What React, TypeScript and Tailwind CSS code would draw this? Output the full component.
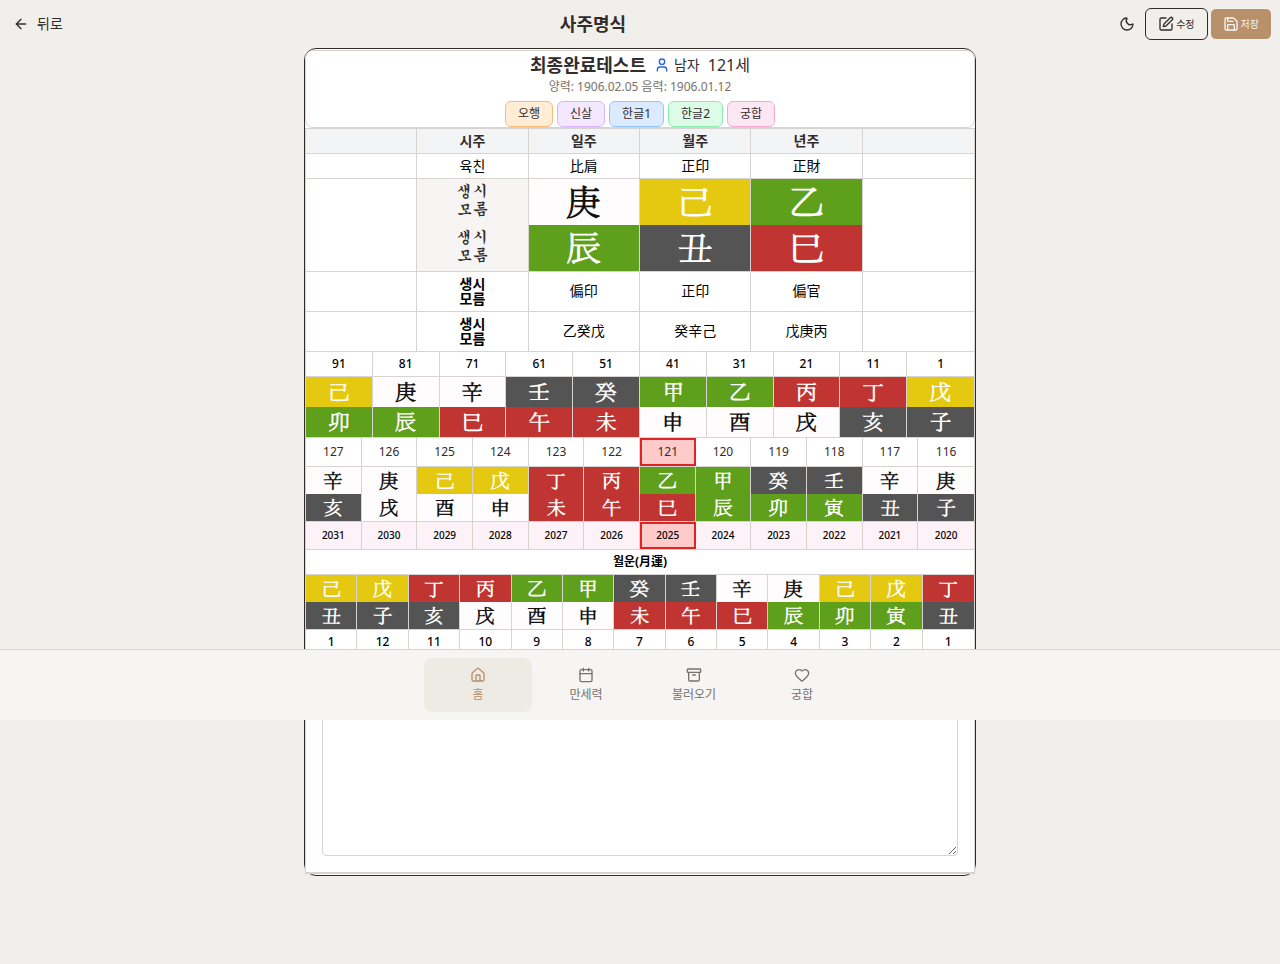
import { ArrowLeft, Moon, SquarePen, Save, User, House, Calendar, Archive, Heart } from 'lucide-react';

const INK: Record<string, string> = {
  wood: 'bg-[#5e9f1b] text-white',
  fire: 'bg-[#c03431] text-white',
  earth: 'bg-[#e5c910] text-white',
  metal: 'bg-[#fffcfd] text-[#111111]',
  water: 'bg-[#545454] text-white',
};

const ELEMENTS: [string, string][] = [
  ['甲乙寅卯', 'wood'],
  ['丙丁巳午未', 'fire'],
  ['戊己', 'earth'],
  ['庚辛申酉戌', 'metal'],
  ['壬癸亥子丑', 'water'],
  ['辰', 'wood'],
];

function ink(char: string) {
  const found = ELEMENTS.find(([chars]) => chars.includes(char));
  return INK[found ? found[1] : 'metal'];
}

const BRUSH = "font-['KaiTi','Gungsuh','Noto_Serif_CJK_KR','Noto_Sans_CJK_KR',serif]";
const TABLE = 'w-full table-fixed border-separate border-spacing-0 text-center';
const LINE = 'border-r border-[#d6d3d1] last:border-r-0';
const CELL = LINE + ' border-b p-0';

function InkRow({ chars, className, last }: { chars: string; className: string; last?: boolean }) {
  return (
    <tr>
      {[...chars].map((c, i) => (
        <td key={i} className={`${last ? CELL : LINE + ' p-0'} pb-0.5 ${BRUSH} font-bold ${className} ${ink(c)}`}>
          {c}
        </td>
      ))}
    </tr>
  );
}

function TextRow({ items, className, selected, tall }: { items: string[]; className: string; selected?: string; tall?: boolean }) {
  return (
    <tr>
      {items.map((t, i) => (
        <td key={i} className={`${CELL} ${className}`}>
          {t === selected ? (
            <div
              className={`-mr-px flex items-center justify-center border-2 border-[#dc2626] bg-[#fecaca] ${
                tall ? 'h-7' : 'h-[27px]'
              }`}
            >
              {t}
            </div>
          ) : (
            t
          )}
        </td>
      ))}
    </tr>
  );
}

const CHIPS = [
  ['오행', 'border-[#fdba74] bg-[#ffedd5]'],
  ['신살', 'border-[#d8b4fe] bg-[#f3e8ff]'],
  ['한글1', 'border-[#93c5fd] bg-[#dbeafe]'],
  ['한글2', 'border-[#86efac] bg-[#dcfce7]'],
  ['궁합', 'border-[#f9a8d4] bg-[#fce7f3]'],
];

const NAV = [
  { label: '홈', Icon: House, active: true },
  { label: '만세력', Icon: Calendar, active: false },
  { label: '불러오기', Icon: Archive, active: false },
  { label: '궁합', Icon: Heart, active: false },
];

function Unknown() {
  return (
    <>
      생시
      <br />
      모름
    </>
  );
}

function PillarTable() {
  return (
    <table className={TABLE + ' border-t border-[#d6d3d1] text-sm text-black'}>
      <thead>
        <tr className="bg-[#f3f4f6] text-[#332c2b]">
          {['', '시주', '일주', '월주', '년주', ''].map((h, i) => (
            <th key={i} className={CELL + ' h-[25px] leading-5 font-bold'}>{h}</th>
          ))}
        </tr>
      </thead>
      <tbody>
        <TextRow items={['', '육친', '比肩', '正印', '正財', '']} className="h-[25px] leading-5" />
        <tr>
          <td rowSpan={2} className={CELL} />
          <td className={`${LINE} ${BRUSH} h-[46px] bg-[#f6f5f3] p-0 pb-1 text-base leading-[18px] text-[#332c2b]`}><Unknown /></td>
          {[...'庚己乙'].map((c) => (
            <td key={c} className={`${LINE} ${BRUSH} h-[46px] p-0 pb-1 text-4xl leading-[42px] font-bold ${ink(c)}`}>{c}</td>
          ))}
          <td rowSpan={2} className={CELL} />
        </tr>
        <tr>
          <td className={`${CELL} ${BRUSH} h-[47px] bg-[#f6f5f3] pb-1 text-base leading-[18px] text-[#332c2b]`}><Unknown /></td>
          {[...'辰丑巳'].map((c) => (
            <td key={c} className={`border-r border-b border-[#d6d3d1] p-0 pb-1 ${BRUSH} text-4xl leading-[42px] font-bold ${ink(c)}`}>{c}</td>
          ))}
        </tr>
        {[['偏印', '正印', '偏官'], ['乙癸戊', '癸辛己', '戊庚丙']].map((row) => (
          <tr key={row[0]}>
            <td className={CELL} />
            <td className={CELL + ' h-10 pb-0.5 leading-[15px] font-bold'}><Unknown /></td>
            {row.map((t) => (
              <td key={t} className={CELL + ' pb-0.5'}>{t}</td>
            ))}
            <td className={CELL} />
          </tr>
        ))}
      </tbody>
    </table>
  );
}

export default function App() {
  return (
    <div className="relative min-h-screen bg-[#f1efeb] pb-[88px] font-['Noto_Sans','Noto_Sans_CJK_KR',sans-serif] text-[#332c2b]">
      <header className="flex h-12 items-center justify-between pr-2">
        <button className="flex items-center gap-2 px-[13px] text-sm">
          <ArrowLeft size={16} />
          뒤로
        </button>
        <h1 className="text-lg font-bold">사주명식</h1>
        <div className="flex items-center gap-px">
          <button aria-label="다크 모드" className="flex w-[34px] justify-center">
            <Moon size={16} />
          </button>
          <button className="flex h-8 items-center gap-0.5 rounded-md border border-[#332c2b] px-3 text-[10px]">
            <SquarePen size={16} />
            수정
          </button>
          <button className="ml-px flex h-8 items-center gap-0.5 rounded-md border border-[#f6f5f3] bg-[#b8906a] px-3 text-[10px] text-[#f6f5f3]">
            <Save size={16} />
            저장
          </button>
        </div>
      </header>

      <main className="mx-auto max-w-2xl rounded-xl border border-[#332c2b] bg-white py-px">
        <section className="flex flex-col items-center rounded-lg border border-[#d6d3d1] bg-white">
          <div className="flex h-7 items-center gap-2">
            <h2 className="text-lg font-bold">최종완료테스트</h2>
            <span className="flex items-center gap-1 text-sm">
              <User size={16} className="text-[#2563eb]" />
              남자
            </span>
            <span className="text-base">121세</span>
          </div>
          <p className="text-xs leading-4 text-[#78716c]">양력: 1906.02.05 음력: 1906.01.12</p>
          <div className="mt-1.5 flex gap-1">
            {CHIPS.map(([label, tone]) => (
              <button key={label} className={`flex h-[26px] items-center rounded-md border px-3 text-xs ${tone}`}>
                {label}
              </button>
            ))}
          </div>
        </section>

        <div className="border-x border-b-2 border-[#d6d3d1] bg-white">
          <PillarTable />
          <table className={TABLE + ' text-black'}>
            <tbody>
              <TextRow items={['91', '81', '71', '61', '51', '41', '31', '21', '11', '1']} className="h-[25px] text-xs font-medium" />
              <InkRow chars="己庚辛壬癸甲乙丙丁戊" className="h-[30px] text-[22px] leading-7" />
              <InkRow chars="卯辰巳午未申酉戌亥子" className="h-[31px] text-[22px] leading-7" last />
            </tbody>
          </table>
          <table className={TABLE + ' text-black'}>
            <tbody>
              <TextRow
                items={['127', '126', '125', '124', '123', '122', '121', '120', '119', '118', '117', '116']}
                className="h-[29px] text-xs text-[#332c2b]"
                selected="121"
                tall
              />
              <InkRow chars="辛庚己戊丁丙乙甲癸壬辛庚" className="h-[27px] text-xl leading-[25px]" />
              <InkRow chars="亥戌酉申未午巳辰卯寅丑子" className="h-[28px] text-xl leading-[25px]" last />
              <TextRow
                items={['2031', '2030', '2029', '2028', '2027', '2026', '2025', '2024', '2023', '2022', '2021', '2020']}
                className="h-7 bg-[#fdf2f8] text-[10px] font-medium"
                selected="2025"
              />
            </tbody>
          </table>
          <table className={TABLE + ' text-xs text-black'}>
            <thead>
              <tr>
                <th colSpan={13} className={CELL + ' h-[25px] font-bold'}>월운(月運)</th>
              </tr>
            </thead>
            <tbody>
              <InkRow chars="己戊丁丙乙甲癸壬辛庚己戊丁" className="h-[27px] text-xl leading-[25px]" />
              <InkRow chars="丑子亥戌酉申未午巳辰卯寅丑" className="h-[28px] text-xl leading-[25px]" last />
              <TextRow items={['1', '12', '11', '10', '9', '8', '7', '6', '5', '4', '3', '2', '1']} className="h-[25px] font-medium" />
            </tbody>
          </table>
          <div className="px-4 pt-8 pb-4">
            <textarea aria-label="메모" className="block h-[169px] w-full resize-y rounded-sm border border-[#d1d5db] bg-white p-3 text-sm" />
          </div>
        </div>
      </main>

      <nav className="absolute inset-x-0 top-[649px] flex justify-center border-t border-[#d6d3d1] bg-[#f6f5f3] py-2">
        {NAV.map(({ label, Icon, active }) => (
          <a
            key={label}
            href="#"
            className={`flex h-[54px] w-[108px] flex-col items-center justify-center gap-1 rounded-lg text-xs ${
              active ? 'bg-[#eeebe5] text-[#b8906a]' : 'text-[#78716c]'
            }`}
          >
            <Icon size={16} />
            {label}
          </a>
        ))}
      </nav>
    </div>
  );
}
